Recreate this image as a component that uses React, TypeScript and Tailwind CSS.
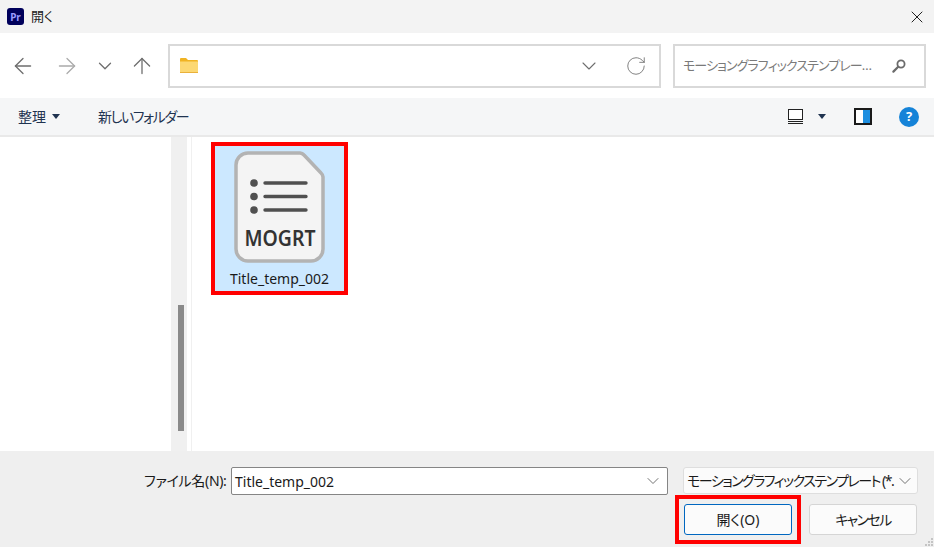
import { ArrowLeft, ArrowRight, ArrowUp, ChevronDown, RotateCw, X } from "lucide-react";

const FONT = "[font-family:'Noto_Sans','Noto_Sans_CJK_JP',sans-serif] [font-feature-settings:'palt']";

function Caret() {
  return (
    <svg width="8" height="5" viewBox="0 0 8 5" className="shrink-0">
      <path d="M0 0h8L4 5z" fill="#1f3350" />
    </svg>
  );
}

function FolderIcon() {
  return (
    <svg width="18" height="15" viewBox="0 0 18 15">
      <path d="M0 1a1 1 0 0 1 1-1h5l2 2h9a1 1 0 0 1 1 1v2H0z" fill="#f0b323" />
      <path d="M0 3.5h18V14a1 1 0 0 1-1 1H1a1 1 0 0 1-1-1z" fill="#fcd873" />
      <path d="M0 14h18v1H0z" fill="#eab13a" />
    </svg>
  );
}

function SearchIcon() {
  return (
    <svg width="14" height="14" viewBox="0 0 14 14" fill="none">
      <circle cx="9" cy="5" r="3.6" stroke="#6b6b6b" strokeWidth="1.8" />
      <path d="M6.2 7.8 1.4 12.6" stroke="#6b6b6b" strokeWidth="2.2" strokeLinecap="round" />
    </svg>
  );
}

function MogrtIcon() {
  return (
    <svg width="92" height="112" viewBox="0 0 92 112">
      <path
        d="M14 2h52a6 6 0 0 1 4 2l17 18a6 6 0 0 1 2 4v72a12 12 0 0 1-12 12H14a12 12 0 0 1-12-12V14A12 12 0 0 1 14 2z"
        fill="#f4f4f4"
        stroke="#b3b3b3"
        strokeWidth="3.5"
      />
      <circle cx="20" cy="32" r="3.8" fill="#505050" />
      <circle cx="20" cy="45.5" r="3.8" fill="#505050" />
      <circle cx="20" cy="59" r="3.8" fill="#505050" />
      <path d="M31 32h41M31 45.5h41M31 59h41" stroke="#505050" strokeWidth="3.4" strokeLinecap="round" />
      <text
        x="46"
        y="95"
        textAnchor="middle"
        fontSize="22"
        fontWeight="600"
        fontFamily="'Noto Sans', sans-serif"
        fill="#333333"
        textLength="71"
        lengthAdjust="spacingAndGlyphs"
      >
        MOGRT
      </text>
    </svg>
  );
}

function ResizeGrip() {
  return (
    <svg width="9" height="9" viewBox="0 0 9 9" className="absolute bottom-0 right-0" fill="#c4c4c4">
      <rect x="6" y="0" width="2" height="2" />
      <rect x="3" y="3" width="2" height="2" />
      <rect x="6" y="3" width="2" height="2" />
      <rect x="0" y="6" width="2" height="2" />
      <rect x="3" y="6" width="2" height="2" />
      <rect x="6" y="6" width="2" height="2" />
    </svg>
  );
}

export default function App() {
  return (
    <div className={`${FONT} flex h-[547px] w-[934px] flex-col overflow-hidden bg-white text-[14px] text-[#1a1a1a]`}>
      {/* title bar */}
      <div className="flex h-[33px] items-center bg-[#f3f3f3] pl-[7px] pr-[7px]">
        <div className="flex h-[17px] w-[17px] items-center justify-center rounded-[3px] bg-[#00005b] text-[10px] font-bold leading-none text-[#9999ff]">
          Pr
        </div>
        <span className="ml-[7px] text-[13px]">開く</span>
        <X className="ml-auto h-[20px] w-[20px] text-[#222222]" strokeWidth={1.2} />
      </div>

      {/* nav bar */}
      <div className="flex h-[65px] items-center bg-white pl-[10px]">
        <ArrowLeft className="h-[26px] w-[26px] text-[#6e6e6e]" strokeWidth={1.2} />
        <ArrowRight className="ml-[18px] h-[26px] w-[26px] text-[#ababab]" strokeWidth={1.2} />
        <ChevronDown className="ml-[14px] h-[22px] w-[22px] text-[#6e6e6e]" strokeWidth={1.4} />
        <ArrowUp className="ml-[13px] h-[26px] w-[26px] text-[#6e6e6e]" strokeWidth={1.2} />
        <div className="ml-[13px] flex h-[44px] w-[493px] items-center border-2 border-[#d9d9d9] pl-[10px] pr-[12px]">
          <FolderIcon />
          <ChevronDown className="ml-auto h-[24px] w-[24px] text-[#6e6e6e]" strokeWidth={1.1} />
          <RotateCw className="ml-[24px] h-[22px] w-[22px] text-[#777777]" strokeWidth={1} />
        </div>
        <div className="ml-[12px] flex h-[44px] w-[253px] items-center border-2 border-[#d9d9d9] pl-[8px] pr-[18px] text-[13px] tracking-[-0.9px] text-[#7a7a7a]">
          <span className="whitespace-nowrap">モーショングラフィックステンプレー…</span>
          <span className="ml-auto">
            <SearchIcon />
          </span>
        </div>
      </div>

      {/* toolbar */}
      <div className="flex h-[39px] items-center border-b-2 border-[#e9e9e9] bg-[#f5f6f7] pl-[18px] pr-[15px] text-[14px] text-[#1f3350]">
        <span>整理</span>
        <span className="ml-[6px]">
          <Caret />
        </span>
        <span className="ml-[38px] tracking-[-1.4px]">新しいフォルダー</span>
        <div className="ml-auto flex h-[18px] w-[18px] items-center justify-center">
          <div className="h-[15px] w-[15px] border-b-[3px] border-double border-[#222222]">
            <div className="h-[11px] border border-[#222222] bg-white" />
          </div>
        </div>
        <span className="ml-[14px]">
          <Caret />
        </span>
        <div className="ml-[28px] flex h-[17px] w-[18px] border-2 border-[#1a1a1a] bg-white">
          <div className="w-1/2 bg-white" />
          <div className="w-1/2 bg-[#1e8fe0]" />
        </div>
        <div className="ml-[27px] flex h-[20px] w-[20px] items-center justify-center rounded-full bg-[#1583d8] text-[13px] font-bold leading-none text-white">
          ?
        </div>
      </div>

      {/* main */}
      <div className="flex min-h-0 flex-1">
        <div className="w-[171px] bg-white" />
        <div className="flex w-[16px] flex-col bg-[#f0f0f0] pl-[7px] pt-[168px]">
          <div className="h-[126px] w-[6px] bg-[#8a8a8a]" />
        </div>
        <div className="ml-[4px] flex-1 border-l border-[#f0f0f0] pl-[19px] pt-[5px]">
          <div className="flex h-[153px] w-[137px] flex-col items-center border-4 border-[#ff0000] bg-[#cce8ff] pt-[5px]">
            <MogrtIcon />
            <span className="mt-[6px] text-[14px] leading-[20px]">Title_temp_002</span>
          </div>
        </div>
      </div>

      {/* footer */}
      <div className="relative flex h-[96px] flex-col bg-[#efefef] pl-[144px] pt-[16px]">
        <div className="flex items-start">
          <span className="w-[87px] whitespace-nowrap text-[14px] leading-[28px] tracking-[-0.3px]">ファイル名(N):</span>
          <div className="flex h-[28px] w-[437px] items-center rounded-[2px] border border-[#858585] bg-white pl-[3px] pr-[4px]">
            <span className="text-[14px]">Title_temp_002</span>
            <ChevronDown className="ml-auto h-[20px] w-[20px] text-[#666666]" strokeWidth={1.1} />
          </div>
          <div className="ml-[15px] flex h-[27px] w-[235px] items-center rounded-[3px] border border-[#dedede] bg-[#fbfbfb] pl-[3px] pr-[2px]">
            <span className="whitespace-nowrap text-[14px] tracking-[-1.5px]">モーショングラフィックステンプレート (*.</span>
            <ChevronDown className="ml-auto h-[20px] w-[20px] shrink-0 text-[#666666]" strokeWidth={1.1} />
          </div>
        </div>
        <div className="ml-[531px] flex items-center">
          <div className="flex h-[49px] w-[126px] items-center justify-center border-4 border-[#ff0000]">
            <button className="h-[31px] w-[108px] rounded-[3px] border border-[#0067c0] bg-[#fbfbfb] text-[14px]">
              開く(O)
            </button>
          </div>
          <button className="ml-[8px] h-[31px] w-[108px] rounded-[3px] border border-[#d5d5d5] bg-[#fbfbfb] text-[14px] tracking-[-1.6px]">
            キャンセル
          </button>
        </div>
        <ResizeGrip />
      </div>
    </div>
  );
}
